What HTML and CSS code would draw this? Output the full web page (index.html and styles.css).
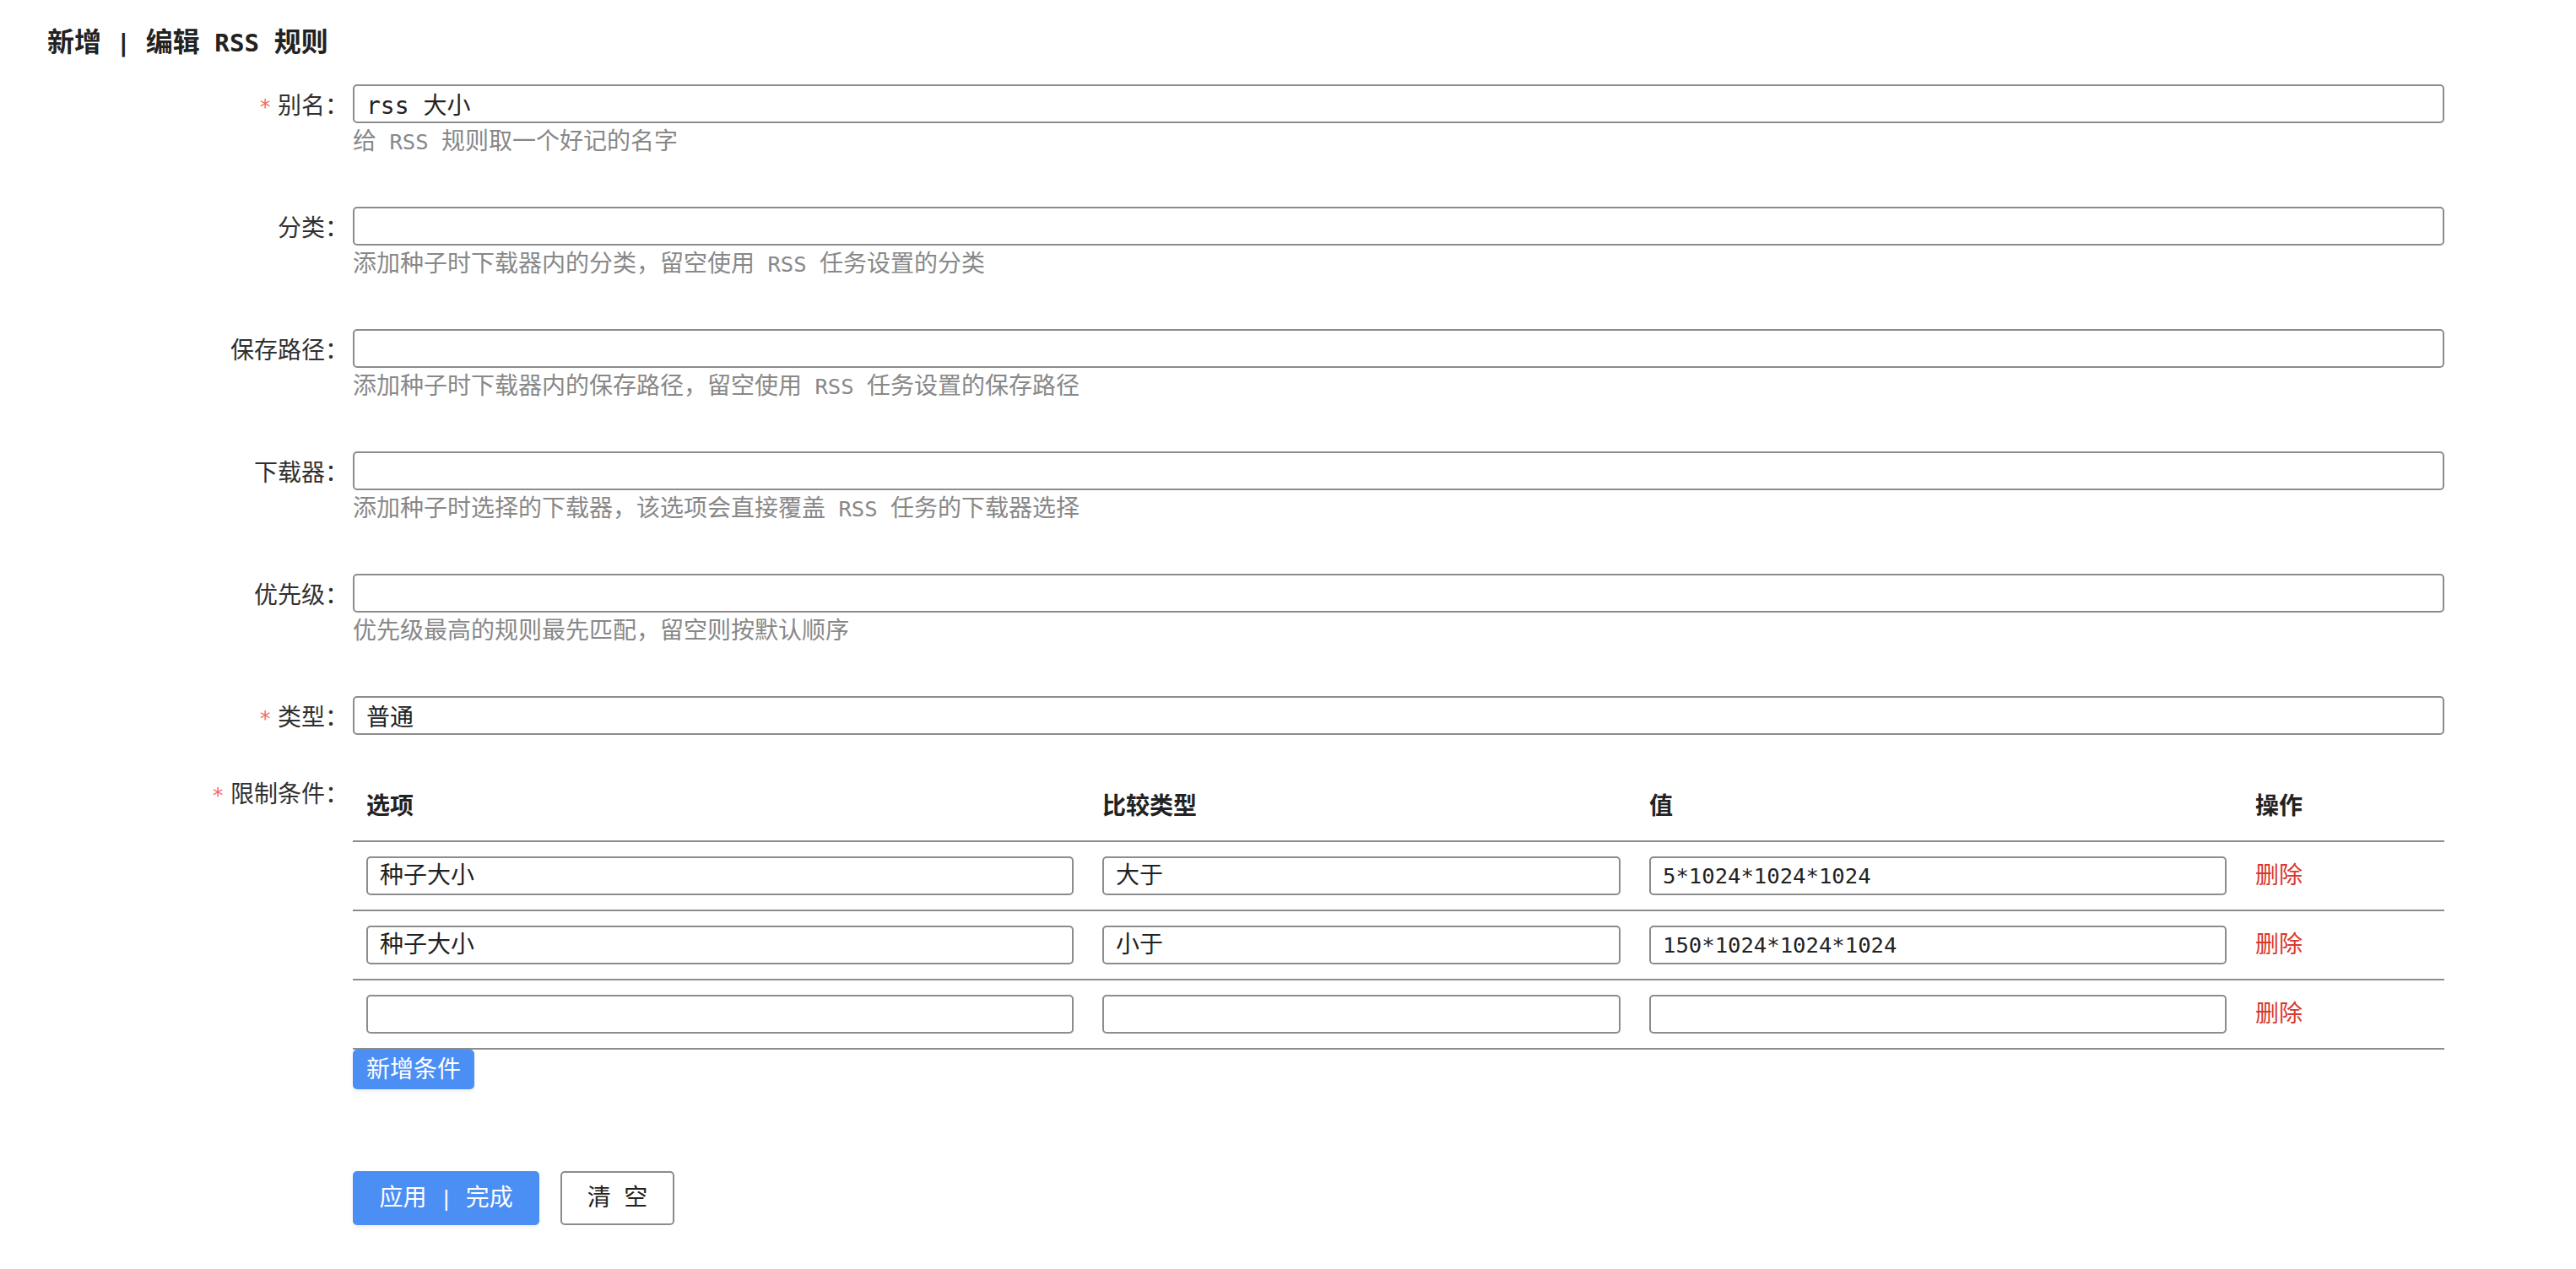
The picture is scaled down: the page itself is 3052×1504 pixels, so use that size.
FILE: index.html
```html
<!DOCTYPE html>
<html lang="zh-CN">
<head>
<meta charset="utf-8">
<title>新增 | 编辑 RSS 规则</title>
<link rel="stylesheet" href="styles.css">
</head>
<body>
<div class="page">
  <h2 class="title">新增<span class="en"> | </span>编辑<span class="en"> RSS </span>规则</h2>
  <form class="form">
    <div class="item">
      <label class="label req">别名</label>
      <div class="field">
        <input class="input" value="rss 大小">
        <div class="hint">给<span class="en"> RSS </span>规则取一个好记的名字</div>
      </div>
    </div>
    <div class="item">
      <label class="label">分类</label>
      <div class="field">
        <input class="input" value="">
        <div class="hint">添加种子时下载器内的分类，留空使用<span class="en"> RSS </span>任务设置的分类</div>
      </div>
    </div>
    <div class="item">
      <label class="label">保存路径</label>
      <div class="field">
        <input class="input" value="">
        <div class="hint">添加种子时下载器内的保存路径，留空使用<span class="en"> RSS </span>任务设置的保存路径</div>
      </div>
    </div>
    <div class="item">
      <label class="label">下载器</label>
      <div class="field">
        <input class="input" value="">
        <div class="hint">添加种子时选择的下载器，该选项会直接覆盖<span class="en"> RSS </span>任务的下载器选择</div>
      </div>
    </div>
    <div class="item">
      <label class="label">优先级</label>
      <div class="field">
        <input class="input" value="">
        <div class="hint">优先级最高的规则最先匹配，留空则按默认顺序</div>
      </div>
    </div>
    <div class="item">
      <label class="label req">类型</label>
      <div class="field">
        <input class="input" value="普通">
      </div>
    </div>
    <div class="item">
      <label class="label req">限制条件</label>
      <div class="field">
        <table class="cond">
          <colgroup>
            <col class="c1"><col class="c2"><col class="c3"><col class="c4">
          </colgroup>
          <thead>
            <tr><th>选项</th><th>比较类型</th><th>值</th><th>操作</th></tr>
          </thead>
          <tbody>
            <tr>
              <td><input class="input" value="种子大小"></td>
              <td><input class="input" value="大于"></td>
              <td><input class="input num" value="5*1024*1024*1024"></td>
              <td><a class="del" href="#">删除</a></td>
            </tr>
            <tr>
              <td><input class="input" value="种子大小"></td>
              <td><input class="input" value="小于"></td>
              <td><input class="input num" value="150*1024*1024*1024"></td>
              <td><a class="del" href="#">删除</a></td>
            </tr>
            <tr>
              <td><input class="input" value=""></td>
              <td><input class="input" value=""></td>
              <td><input class="input num" value=""></td>
              <td><a class="del" href="#">删除</a></td>
            </tr>
          </tbody>
        </table>
        <button type="button" class="btn btn-add">新增条件</button>
      </div>
    </div>
    <div class="actions">
      <button type="button" class="btn btn-main">应用<span class="en"> | </span>完成</button>
      <button type="button" class="btn btn-plain">清<span class="en"> </span>空</button>
    </div>
  </form>
</div>
</body>
</html>
```

FILE: styles.css
```css
* {
  box-sizing: border-box;
}

body {
  margin: 0;
  background: #fff;
  font-family: "DejaVu Sans Mono", "Noto Sans CJK SC", monospace;
  font-size: 28px;
  color: #303030;
}

.page {
  padding: 28px 156px 60px 56px;
}

.title {
  height: 44px;
  margin: 0 0 28px;
  font-size: 32px;
  line-height: 44px;
  font-weight: 700;
  color: #222;
}

.en {
  font-size: 25.6px;
}

.title .en {
  font-size: 29.2px;
}

.form {
  margin: 0;
}

.item {
  display: flex;
  align-items: flex-start;
  margin-bottom: 45px;
}

.label {
  flex: 0 0 362px;
  height: 46px;
  text-align: right;
  padding-right: 5px;
  line-height: 46px;
  white-space: nowrap;
}

.label.req::before {
  content: "*";
  color: #f56c6c;
  font-size: 25.6px;
  margin-right: 7px;
}

.label::after {
  content: "：";
  font-family: "Noto Sans CJK JP", sans-serif;
}

.field {
  flex: 1;
  min-width: 0;
}

.input {
  display: block;
  width: 100%;
  height: 46px;
  margin: 0;
  border: 2px solid #8c8c8c;
  border-radius: 5px;
  padding: 0 14px;
  font: inherit;
  color: #222;
  background: #fff;
  outline: none;
}

.input.num {
  font-size: 25.6px;
}

.hint {
  height: 43px;
  line-height: 43px;
  margin-bottom: 11px;
  color: #888;
  white-space: nowrap;
}

.cond {
  width: 100%;
  table-layout: fixed;
  border-collapse: separate;
  border-spacing: 0;
}

.c1 { width: 872px; }
.c2 { width: 648px; }
.c3 { width: 718px; }
.c4 { width: 240px; }

.cond th,
.cond td {
  height: 82px;
  padding: 17px 18px 17px 16px;
  border-bottom: 2px solid #8c8c8c;
  text-align: left;
  line-height: 46px;
  vertical-align: middle;
}

.cond th {
  font-weight: 700;
  color: #222;
}

.del {
  color: #d9382b;
  text-decoration: none;
}

.btn {
  display: inline-block;
  vertical-align: top;
  margin: 0;
  border: 2px solid #4b8ef4;
  background: #4b8ef4;
  color: #fff;
  border-radius: 5px;
  font: inherit;
  text-align: center;
  white-space: nowrap;
  box-shadow: 0 3px 4px rgba(0, 0, 0, 0.06);
  cursor: pointer;
}

.btn-add {
  height: 47px;
  line-height: 43px;
  padding: 0 14px;
}

.actions {
  display: flex;
  gap: 25px;
  padding-left: 362px;
  margin-top: 97px;
}

.btn-main {
  height: 64px;
  line-height: 60px;
  padding: 0 29.5px;
}

.btn-plain {
  height: 64px;
  line-height: 60px;
  padding: 0 29.5px;
  background: #fff;
  color: #222;
  border-color: #8c8c8c;
  box-shadow: none;
}
```
